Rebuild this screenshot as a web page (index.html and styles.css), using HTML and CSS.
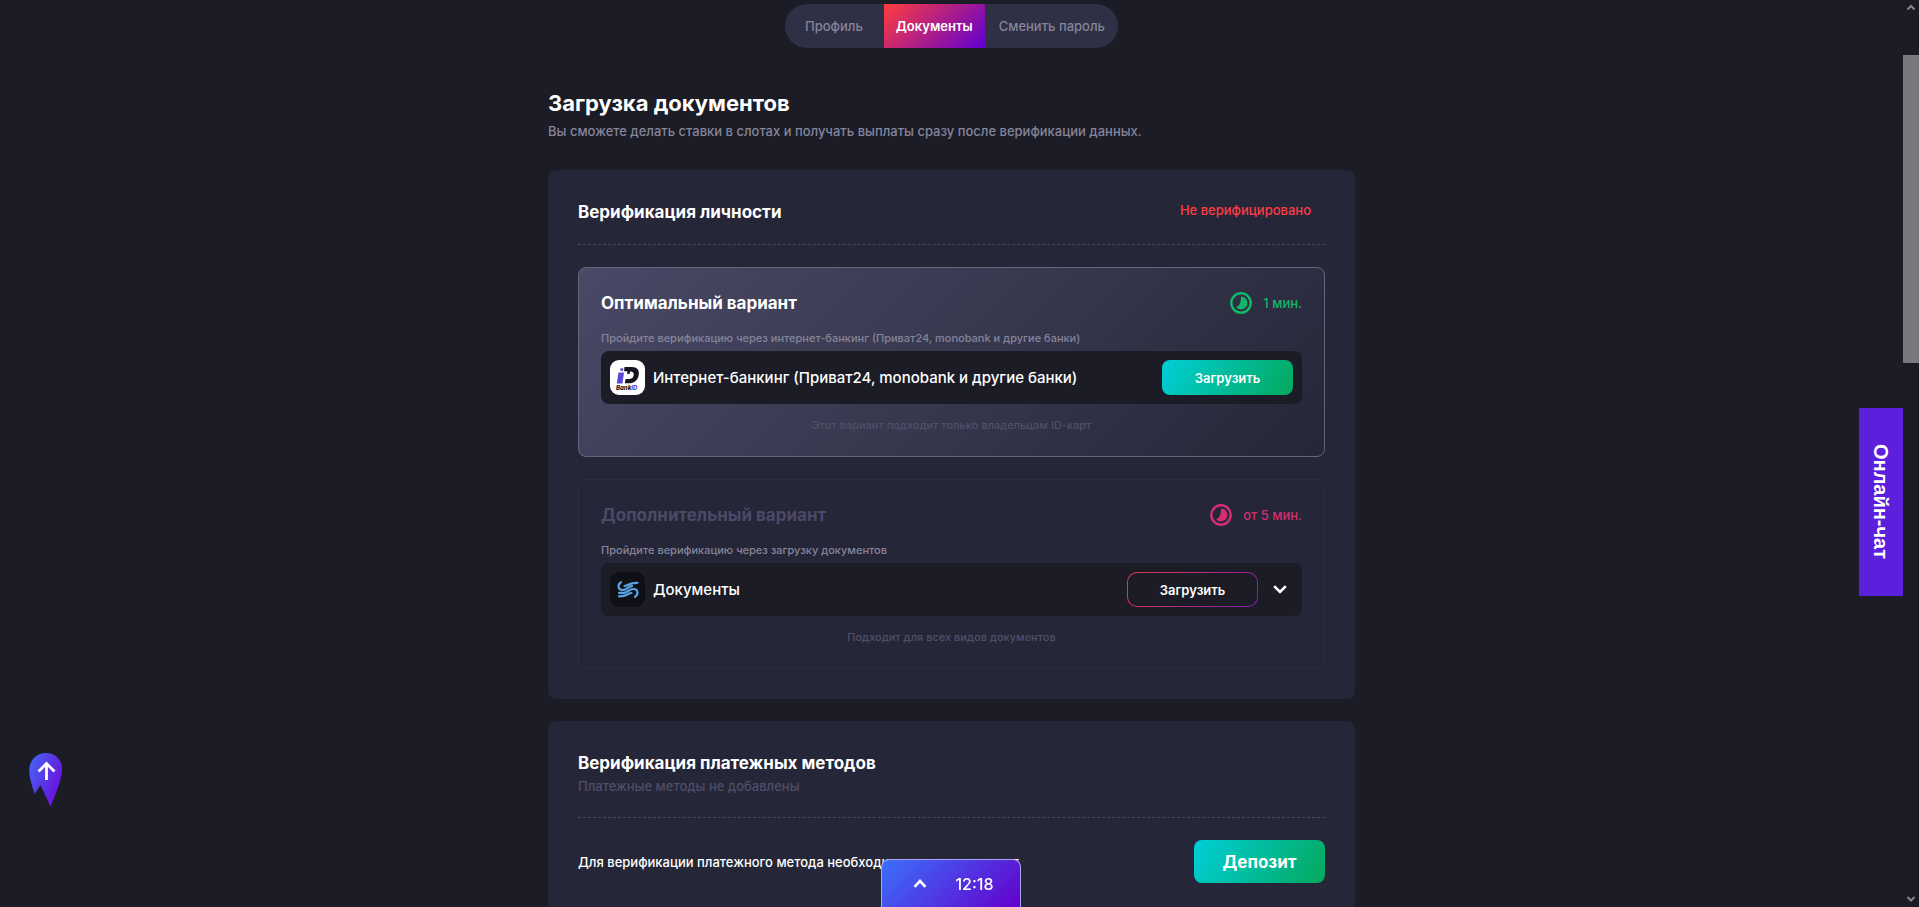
FILE: index.html
```html
<!DOCTYPE html>
<html lang="ru">
<head>
	<meta charset="UTF-8">
	<title>Загрузка документов</title>
	<link rel="stylesheet" href="styles.css">
</head>
<body>
	<main class="page">
		<nav class="tabs">
			<a href="#profile">Профиль</a>
			<a href="#documents" class="active">Документы</a>
			<a href="#password">Сменить пароль</a>
		</nav>

		<header class="head">
			<h1>Загрузка документов</h1>
			<p>Вы сможете делать ставки в слотах и получать выплаты сразу после верификации данных.</p>
		</header>

		<section class="card">
			<div class="card-head">
				<h2>Верификация личности</h2>
				<span class="status">Не верифицировано</span>
			</div>

			<article class="option best">
				<div class="option-head">
					<h3>Оптимальный вариант</h3>
					<span class="time">
						<svg width="22" height="22" viewBox="0 0 22 22"><circle cx="11" cy="11" r="9.7" fill="none" stroke="currentColor" stroke-width="2.4"/><path d="M11 4.600a6.400 6.400 0 1 1-4.800 10.600C9 14 11 12 11 4.600z" fill="currentColor"/></svg>
						1 мин.
					</span>
				</div>
				<p class="note">Пройдите верификацию через интернет-банкинг (Приват24, monobank и другие банки)</p>
				<div class="method">
					<svg class="logo" viewBox="0 0 35 35">
						<rect width="35" height="35" rx="9" fill="#fff"/>
						<path d="M8.500 12.500h5.500L12.500 23.500H6.800z" fill="#5a48d8"/>
						<circle cx="11.800" cy="9.500" r="1.600" fill="#5a48d8"/>
						<path d="M14.500 7h7.500c5 0 7.500 3 6.800 7.500-.7 5.500-4.500 8.800-10 8.800h-4l.8-4.300h3.500c2.600 0 4.300-1.600 4.600-4 .3-2.200-.8-3.400-2.900-3.400h-.8l-.4 2.500-2.600-.3.400-2.500h-3.400z" fill="#151522"/>
						<text x="6" y="29.500" class="logo-text" fill="#151522">Bank<tspan fill="#5a48d8">ID</tspan></text>
					</svg>
					<span class="method-name">Интернет-банкинг (Приват24, monobank и другие банки)</span>
					<button type="button" class="btn green">Загрузить</button>
				</div>
				<p class="hint">Этот вариант подходит только владельцам ID-карт</p>
			</article>

			<article class="option extra">
				<div class="option-head">
					<h3>Дополнительный вариант</h3>
					<span class="time">
						<svg width="22" height="22" viewBox="0 0 22 22"><circle cx="11" cy="11" r="9.7" fill="none" stroke="currentColor" stroke-width="2.4"/><path d="M11 4.600a6.400 6.400 0 1 1-4.800 10.600C9 14 11 12 11 4.600z" fill="currentColor"/></svg>
						от 5 мин.
					</span>
				</div>
				<p class="note">Пройдите верификацию через загрузку документов</p>
				<div class="method">
					<svg class="logo" viewBox="0 0 35 35">
						<rect width="35" height="35" rx="9" fill="#0f1015"/>
						<g fill="none" stroke="#58a3e8" stroke-width="2.200" stroke-linecap="round">
							<path d="M11 10.200C7.500 12.500 7.500 18 12.500 18C17.500 18 17.500 14.200 22 14.200"/>
							<path d="M14.500 14C18.500 14 18.500 10.500 27.500 10.800"/>
							<path d="M25 24.800C28.500 22.500 28.500 17 23.500 17C18.500 17 18.500 20.800 14 20.800H9"/>
							<path d="M21.500 21C17.500 21 17.500 24.500 9 24.300"/>
						</g>
					</svg>
					<span class="method-name">Документы</span>
					<button type="button" class="btn outline">Загрузить</button>
					<button type="button" class="toggle" aria-label="Показать">
						<svg width="14" height="9" viewBox="0 0 14 9"><path d="M1.200 1.200L7 7l5.800-5.800" fill="none" stroke="#fff" stroke-width="2.600"/></svg>
					</button>
				</div>
				<p class="hint">Подходит для всех видов документов</p>
			</article>
		</section>

		<section class="card">
			<div class="card-head">
				<div>
					<h2>Верификация платежных методов</h2>
					<p class="empty">Платежные методы не добавлены</p>
				</div>
			</div>
			<div class="deposit">
				<p>Для верификации платежного метода необходимо сделать депозит</p>
				<button type="button" class="btn green big">Депозит</button>
			</div>
		</section>
	</main>

	<button type="button" class="up" aria-label="Наверх">
		<svg width="34" height="54" viewBox="0 0 34 54">
			<defs>
				<linearGradient id="upFill" x1="0" y1="0" x2="1" y2="0.600">
					<stop offset="0" stop-color="#4468f5"/>
					<stop offset="1" stop-color="#6a10dc"/>
				</linearGradient>
			</defs>
			<path d="M17 0C26.500 0 34 7 33 18c-1 11-7 25-11.500 35.500L11.500 32 5.500 41C3 32 0 24 .2 17 .5 7 7.500 0 17 0z" fill="url(#upFill)"/>
			<path d="M17.500 27V11M9.500 18.500l8-8 8 8" fill="none" stroke="#fff" stroke-width="2.800"/>
		</svg>
	</button>

	<button type="button" class="chat">Онлайн-чат</button>

	<button type="button" class="clock">
		<svg width="14" height="9" viewBox="0 0 14 9"><path d="M1.500 7.800L7 2l5.500 5.800" fill="none" stroke="#fff" stroke-width="2.600"/></svg>
		<span>12:18</span>
	</button>

	<div class="scroll">
		<svg width="16" height="16" viewBox="0 0 16 16"><path d="M4.500 9.500L8 6l3.500 3.500" fill="none" stroke="#85858c" stroke-width="2"/></svg>
		<span class="thumb"></span>
		<svg width="16" height="16" viewBox="0 0 16 16"><path d="M4.500 6L8 9.500 11.500 6" fill="none" stroke="#85858c" stroke-width="2"/></svg>
	</div>
</body>
</html>
```
FILE: styles.css
```css
* {box-sizing: border-box;}
body, h1, h2, h3, p {margin: 0;}
body {height: 100vh;overflow: hidden;padding-right: 16px;background: #1b1c26;color: #fff;font: 500 14px/20px Inter, "Noto Sans", sans-serif;}
button {border: 0;padding: 0;background: none;color: #fff;font: inherit;cursor: pointer;}
svg {display: block;flex: none;}

.page {max-width: 807px;margin: 0 auto;padding-top: 4px;}

.tabs {display: flex;width: fit-content;height: 44px;margin: 0 auto;border-radius: 22px;overflow: hidden;background: #2f2f45;font-size: 13px;line-height: 44px;}
.tabs a {padding: 0 12px;color: #85859a;text-decoration: none;}
.tabs a:first-child {padding: 0 20px;}
.tabs a:last-child {padding: 0 13px;}
.tabs .active {margin: 0 1px;color: #fff;font-weight: 600;background: linear-gradient(135deg, #ff3d3d, #6000d0);}

.head {margin: 41px 0 25px;}
.head h1 {font-size: 22px;line-height: 28px;font-weight: 700;}
.head p {color: #85859a;font-size: 13px;line-height: 28px;}

.card {margin-bottom: 22px;padding: 30px;border-radius: 8px;background: #252637;}
.card-head {display: flex;justify-content: space-between;margin-bottom: 22px;padding-bottom: 20px;border-bottom: 1px dashed #484860;}
.card-head h2 {font-size: 17px;line-height: 24px;font-weight: 700;}
.status {margin-right: 14px;color: #fc3c44;font-size: 13px;}
.empty {color: #4e4e68;font-size: 13px;line-height: 22px;}

.option {padding: 23px 22px 21px;border: 1px solid #2e2e43;border-radius: 8px;}
.best {margin-bottom: 22px;border-color: #65657c;background: linear-gradient(135deg, #4a4966, #252637);}
.option-head {display: flex;justify-content: space-between;align-items: center;height: 24px;}
.option h3 {font-size: 17px;line-height: 24px;font-weight: 700;}
.extra h3 {color: #4b4a66;}
.time {display: flex;align-items: center;gap: 11px;color: #12b76a;font-size: 13px;}
.extra .time {color: #d42e72;}
.note {margin-top: 13px;color: #85859a;font-size: 11px;line-height: 20px;}
.method {display: flex;align-items: center;height: 53px;margin-top: 3px;padding: 0 9px;border-radius: 8px;background: #1b1c26;}
.logo {width: 35px;height: 35px;margin-right: 8px;}
.logo-text {font: italic 800 6px Inter, sans-serif;}
.method-name {flex: 1;font-size: 15px;}
.hint {margin-top: 11px;color: #505069;font-size: 11px;line-height: 20px;text-align: center;}

.btn {width: 131px;height: 35px;border-radius: 8px;font-size: 13px;font-weight: 600;}
.green {background: linear-gradient(120deg, #00cfd8, #05a85c);}
.outline {border: 1px solid transparent;border-radius: 10px;background: linear-gradient(#1b1c26, #1b1c26) padding-box, linear-gradient(135deg, #e8394f, #7a1fb0) border-box;}
.big {height: 43px;font-size: 17px;font-weight: 700;}
.toggle {margin: 0 6px 0 15px;}
.deposit {display: flex;justify-content: space-between;align-items: center;font-size: 13px;}

.up {position: fixed;left: 29px;bottom: 100px;}
.chat {position: fixed;right: 16px;top: 408px;width: 44px;height: 188px;background: #5c1fdb;font: 700 20px/44px "Liberation Sans", Arial, sans-serif;writing-mode: vertical-rl;}
.clock {position: fixed;left: calc(50% - 79px);bottom: 0;display: flex;align-items: center;justify-content: center;gap: 28px;width: 140px;height: 48px;padding-left: 6px;border: 1px solid #a9a4f0;border-bottom: 0;border-radius: 8px 8px 0 0;background: linear-gradient(135deg, #3b70fa, #6400cc);font-size: 16px;}
.scroll {position: fixed;top: 0;right: 0;bottom: 0;display: flex;flex-direction: column;width: 16px;background: #1b1b25;}
.thumb {height: 34%;margin: 39px 0 auto;background: #79787f;}
```
